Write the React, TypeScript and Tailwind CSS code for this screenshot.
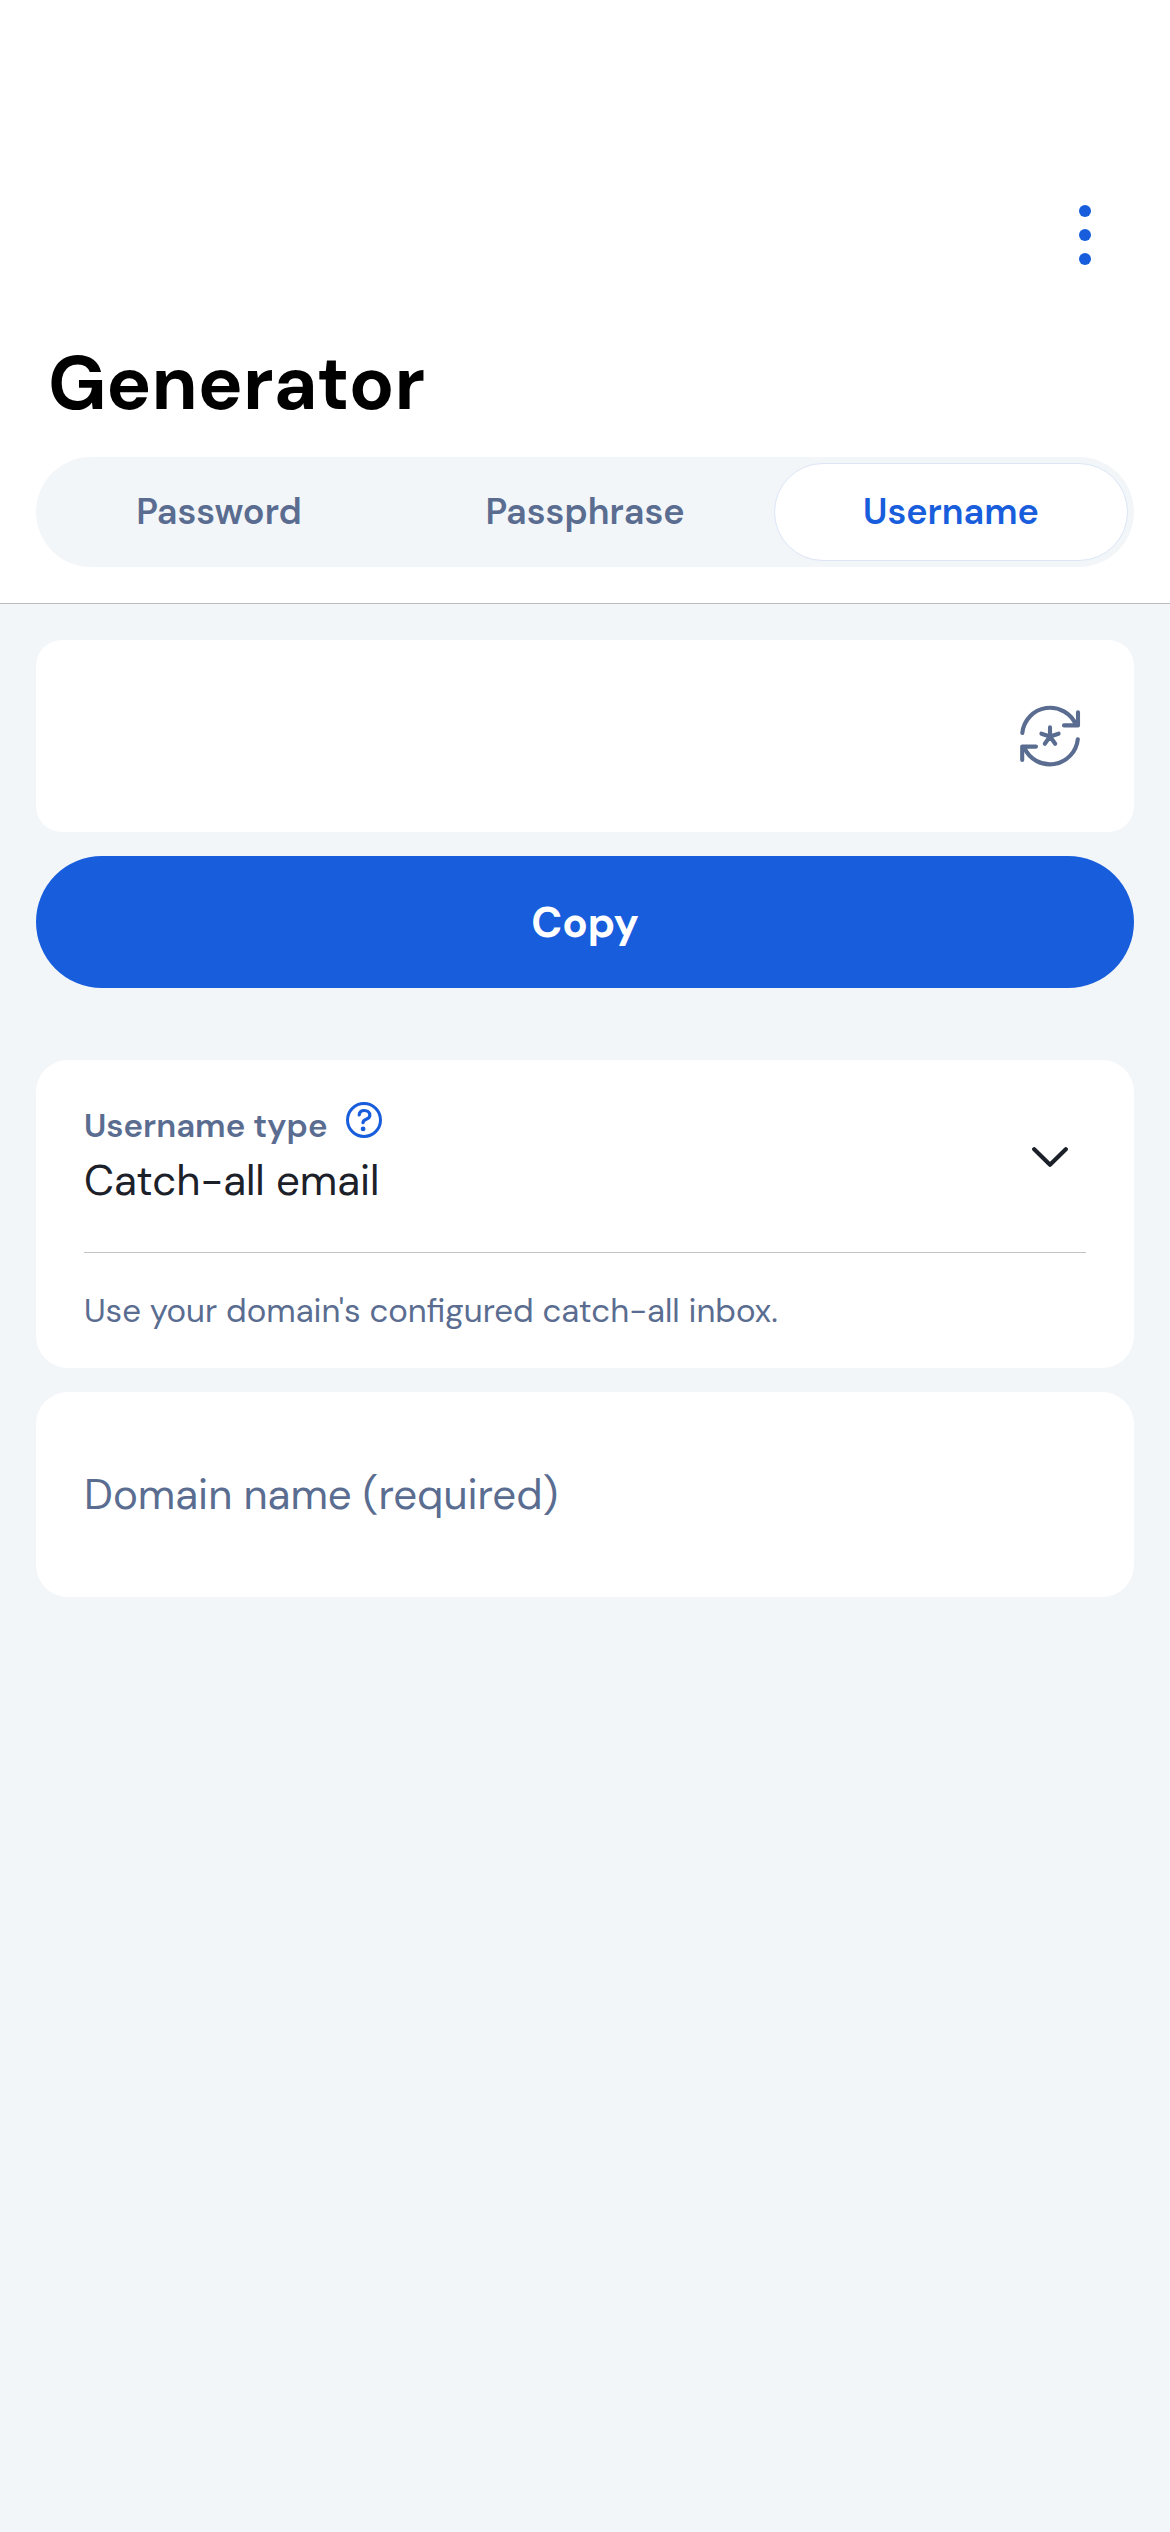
import type { ReactNode } from 'react';

function MoreIcon() {
  return (
    <svg className="h-[60px] w-[12px] fill-[#175ddc]" viewBox="0 0 12 60">
      <circle cx="6" cy="6" r="6" />
      <circle cx="6" cy="30" r="6" />
      <circle cx="6" cy="54" r="6" />
    </svg>
  );
}

function GenerateIcon() {
  return (
    <svg
      className="size-[60px] overflow-visible"
      viewBox="0 0 60 60"
      fill="none"
      stroke="currentColor"
      strokeWidth="4.1"
      strokeLinecap="round"
      strokeLinejoin="round"
    >
      <path d="M2.3 27A28 28 0 0 1 56 19" />
      <path d="M44 19.4H58V6.2" />
      <path d="M57.8 33.2A28 28 0 0 1 4.2 41.4" />
      <path d="M16 40.6H2.2V54" />
      <path d="M30 30.5V21.2M30 30.5L21.4 27.7M30 30.5L38.6 27.7M30 30.5L24.8 37.8M30 30.5L35.2 37.8" />
    </svg>
  );
}

function HelpIcon() {
  return (
    <svg className="size-[36px] text-[#175ddc]" viewBox="0 0 36 36" fill="none" stroke="currentColor" strokeLinecap="round">
      <circle cx="18" cy="18" r="16.5" strokeWidth="3" />
      <path d="M13.2 13C13.4 10.2 15.4 8.5 18.2 8.5C21.4 8.5 23.8 10.3 23.8 13.2C23.8 18.3 17 16.3 17 20.7" strokeWidth="3.2" />
      <circle cx="17.1" cy="26.9" r="2.4" fill="currentColor" stroke="none" />
    </svg>
  );
}

function ChevronIcon() {
  return (
    <svg
      className="mt-[2px] h-[20px] w-[36px]"
      viewBox="0 0 36 20"
      fill="none"
      stroke="#1b2029"
      strokeWidth="4.2"
      strokeLinecap="round"
      strokeLinejoin="round"
    >
      <path d="M2.2 2.3L18 17.7L33.8 2.3" />
    </svg>
  );
}

function Tab({ active, children }: { active?: boolean; children: ReactNode }) {
  return (
    <button
      className={
        active
          ? 'flex h-[98px] w-[354px] items-center justify-center rounded-full border border-[#dbe5f6] bg-white pb-px text-[#175ddc]'
          : 'flex h-[98px] w-[342px] items-center justify-center pb-px'
      }
    >
      {children}
    </button>
  );
}

export default function App() {
  return (
    <div className="flex h-[2532px] w-[1170px] flex-col bg-[#f3f6f9] font-['DM_Sans','Inter',sans-serif] text-[#5a6d91]">
      <header className="h-[604px] border-b border-[#b9bdc1] bg-white">
        <div className="flex h-[265px] justify-end pt-[205px] pr-[79px]">
          <button aria-label="More" className="h-[60px]">
            <MoreIcon />
          </button>
        </div>
        <h1 className="mt-[74px] pl-[48px] text-[75px] leading-[90px] font-bold text-black">Generator</h1>
        <nav className="mx-[36px] mt-[28px] flex h-[110px] items-center rounded-full bg-[#f3f6f9] pr-[6px] pl-[12px] text-[36px] font-semibold">
          <Tab>Password</Tab>
          <span className="ml-[24px] mr-[6px]">
            <Tab>Passphrase</Tab>
          </span>
          <span className="ml-auto">
            <Tab active>Username</Tab>
          </span>
        </nav>
      </header>

      <main className="flex flex-col px-[36px] pt-[36px]">
        <div className="flex h-[192px] items-center justify-end rounded-[26px] bg-white pr-[54px]">
          <button aria-label="Generate">
            <GenerateIcon />
          </button>
        </div>
        <button className="mt-[24px] h-[132px] rounded-full bg-[#175ddc] text-[42px] font-bold text-white">Copy</button>

        <section className="mt-[72px] h-[308px] rounded-[32px] bg-white px-[48px]">
          <div className="flex h-[193px] items-center justify-between border-b border-[#c3c4c6] pr-[18px]">
            <div className="pt-[6px]">
              <div className="flex h-[44px] items-center text-[33px] font-semibold">
                Username type
                <span className="mb-[12px] ml-[19px]">
                  <HelpIcon />
                </span>
              </div>
              <div className="text-[42px] leading-[66px] text-[#1b2029]">Catch-all email</div>
            </div>
            <ChevronIcon />
          </div>
          <p className="mt-[36px] text-[33px] leading-[44px]">Use your domain's configured catch-all inbox.</p>
        </section>

        <section className="mt-[24px] flex h-[205px] items-center rounded-[32px] bg-white px-[48px] text-[42px]">
          Domain name (required)
        </section>
      </main>
    </div>
  );
}
